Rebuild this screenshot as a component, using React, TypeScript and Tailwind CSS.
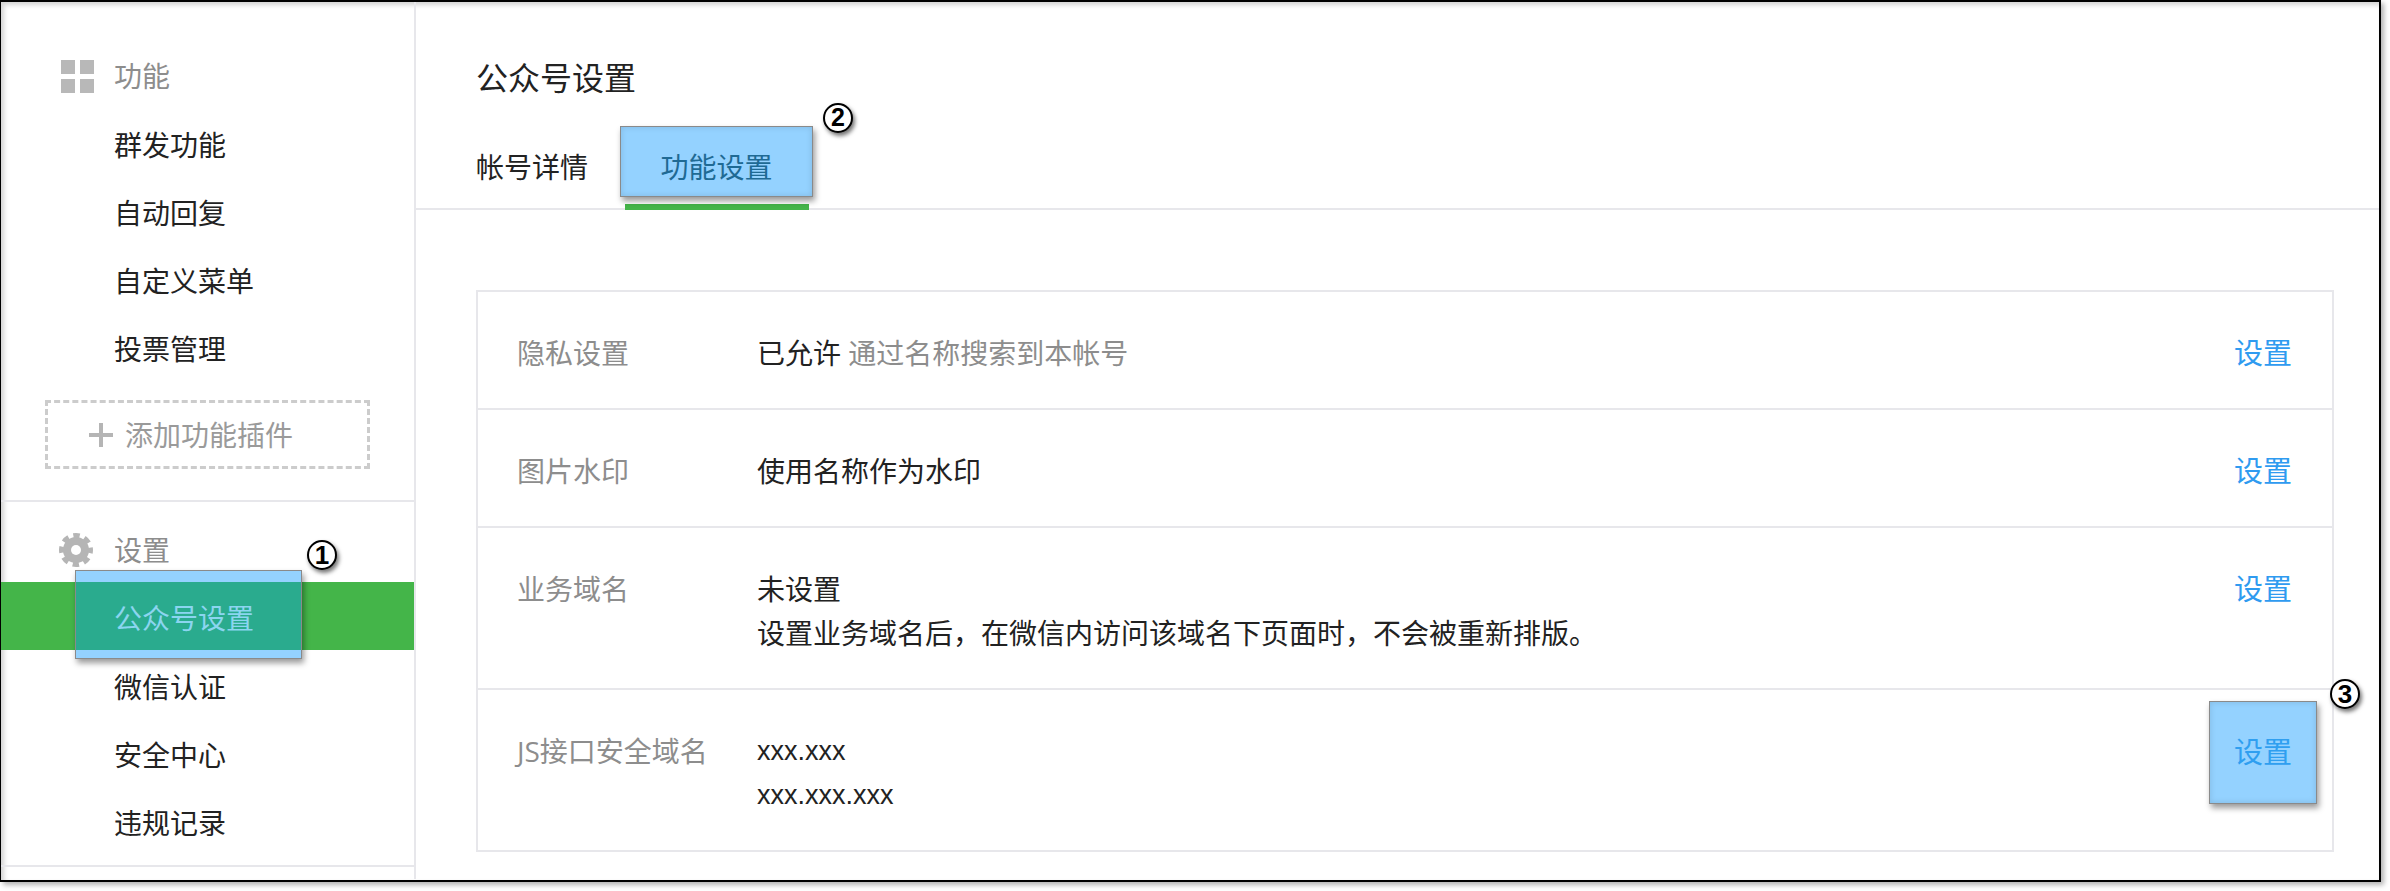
const features = ["群发功能", "自动回复", "自定义菜单", "投票管理"]
const others = ["微信认证", "安全中心", "违规记录"]

const Badge = ({ n, className }: { n: number; className: string }) => (
  <span className={"absolute z-20 flex items-center justify-center rounded-full border-2 border-black bg-white font-['Liberation_Sans',sans-serif] font-bold text-black shadow-[2px_3px_4px_rgba(0,0,0,0.55)] " + className}>
    {n}
  </span>
)

const Gear = () => (
  <svg viewBox="0 0 34 34" className="w-[34px] h-[34px]">
    <circle cx="17" cy="17" r="13" fill="#b5b5b5" />
    <circle cx="17" cy="17" r="14.500" fill="none" stroke="#b5b5b5" strokeWidth="5" strokeDasharray="6.400 5" strokeDashoffset="3.200" />
    <circle cx="17" cy="17" r="5" fill="#ffffff" />
  </svg>
)

const Row = ({ label, children, height, link = true, last = false }: { label: string; children: React.ReactNode; height: string; link?: boolean; last?: boolean }) => (
  <div className={"flex pl-[39px] pr-[40px] pt-[39px] " + height + " " + (last ? "" : "border-b-2 border-[#e7e7eb]")}>
    <div className="w-[240px] shrink-0 text-[#8d8d8d] text-[28px] leading-[44px]">{label}</div>
    <div className="flex-1 text-[#222222] text-[28px] leading-[44px]">{children}</div>
    {link && <a className="text-[#2f9bf0] text-[29px] leading-[44px]">设置</a>}
  </div>
)

const App = () => {
  return (
    <div className="w-[2390px] h-[891px] bg-white font-['Open_Sans','Noto_Sans_CJK_SC',sans-serif]">
      <div className="relative flex w-[2381px] h-[882px] border-2 border-l border-black bg-white shadow-[inset_3px_3px_5px_rgba(0,0,0,0.18),3px_3px_5px_rgba(0,0,0,0.3)]">
        <aside className="w-[415px] shrink-0 border-r-2 border-[#e7e7eb] h-[877px]">
          <div className="pt-[40px] border-b-2 border-[#e7e7eb] h-[500px]">
            <div className="flex items-center h-[68px] pl-[60px] text-[28px] text-[#8d8d8d]">
              <div className="grid grid-cols-2 gap-[5px] w-[33px] mr-[20px]">
                <span className="h-[14px] bg-[#b8b8b8]"></span>
                <span className="h-[14px] bg-[#b8b8b8]"></span>
                <span className="h-[14px] bg-[#b8b8b8]"></span>
                <span className="h-[14px] bg-[#b8b8b8]"></span>
              </div>
              功能
            </div>
            {features.map((item) => (
              <div key={item} className="h-[68px] pl-[113px] text-[28px] leading-[70px] text-[#222222]">{item}</div>
            ))}
            <div className="flex items-center ml-[44px] mt-[18px] w-[325px] h-[69px] border-[3px] border-dashed border-[#cccccc] pl-[41px] text-[28px] text-[#9a9a9a]">
              <svg viewBox="0 0 24 24" className="w-[24px] h-[24px] mr-[12px]" fill="#b5b5b5">
                <path d="M10 0h4v10h10v4H14v10h-4V14H0v-4h10z" />
              </svg>
              添加功能插件
            </div>
          </div>
          <div className="border-b-2 border-[#e7e7eb] h-[365px]">
            <div className="relative flex items-center h-[80px] pt-[16px] pl-[58px] text-[28px] text-[#8d8d8d]">
              <span className="mr-[21px]"><Gear /></span>
              设置
              <Badge n={1} className="left-[306px] top-[38px] w-[30px] h-[30px] text-[26px]" />
            </div>
            <div className="relative h-[68px] bg-[#44b549]">
              <div className="absolute left-[74px] -top-[12px] z-10 w-[227px] h-[89px] border border-[#8a8a8a] bg-[#94d2ff] shadow-[2px_4px_6px_rgba(0,0,0,0.4)]">
                <div className="mt-[11px] h-[68px] bg-[#2aab8e] pl-[38px] text-[28px] leading-[72px] text-[#8bd5f0]">公众号设置</div>
              </div>
            </div>
            {others.map((item) => (
              <div key={item} className="h-[68px] pl-[113px] text-[28px] leading-[75px] text-[#222222]">{item}</div>
            ))}
          </div>
        </aside>

        <main className="flex-1">
          <div className="h-[208px] border-b-2 border-[#e7e7eb]">
            <h1 className="pl-[60px] pt-[51px] h-[152px] text-[32px] leading-[50px] font-normal text-[#222222]">公众号设置</h1>
            <div className="flex pl-[60px]">
              <div className="w-[149px] text-[28px] leading-[26px] text-[#222222]">帐号详情</div>
              <div className="relative w-[184px] h-[56px] border-b-[6px] border-[#44b549]">
                <div className="absolute -left-[5px] -top-[28px] z-10 flex w-[193px] h-[71px] items-center justify-center border border-[#8a8a8a] bg-[#94d2ff] pt-[10px] text-[28px] text-[#1f6a94] shadow-[inset_0_0_6px_rgba(0,0,0,0.12),2px_4px_6px_rgba(0,0,0,0.4)]">功能设置</div>
                <Badge n={2} className="left-[198px] -top-[51px] w-[30px] h-[30px] text-[25px]" />
              </div>
            </div>
          </div>

          <div className="relative mt-[80px] ml-[60px] w-[1858px] border-2 border-[#e7e7eb]">
            <Row label="隐私设置" height="h-[118px]">
              已允许 <span className="text-[#8d8d8d]">通过名称搜索到本帐号</span>
            </Row>
            <Row label="图片水印" height="h-[118px]">使用名称作为水印</Row>
            <Row label="业务域名" height="h-[162px]">
              <div>未设置</div>
              <div>{"设置业务域名后\uFF0C在微信内访问该域名下页面时\uFF0C不会被重新排版。"}</div>
            </Row>
            <Row label="JS接口安全域名" height="h-[160px]" link={false} last>
              <div className="font-['Liberation_Sans',sans-serif] text-[27px]">xxx.xxx</div>
              <div className="font-['Liberation_Sans',sans-serif] text-[27px]">xxx.xxx.xxx</div>
            </Row>
            <a className="absolute right-[15px] bottom-[46px] flex w-[108px] h-[103px] items-center justify-center border border-[#8a8a8a] bg-[#94d2ff] pb-[2px] text-[29px] text-[#2f9ff0] shadow-[inset_0_0_6px_rgba(0,0,0,0.12),2px_4px_6px_rgba(0,0,0,0.4)]">设置</a>
            <Badge n={3} className="-right-[28px] bottom-[141px] w-[30px] h-[30px] text-[26px]" />
          </div>
        </main>
      </div>
    </div>
  )
}

export default App
